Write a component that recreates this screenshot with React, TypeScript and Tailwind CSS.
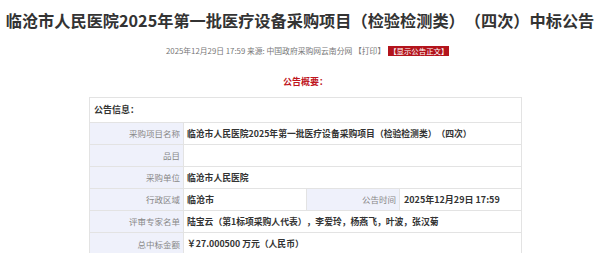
import React from 'react';

interface Row {
  label: string;
  value?: string;
  label2?: string;
  value2?: string;
}

const rows: Row[] = [
  { label: '采购项目名称', value: '临沧市人民医院2025年第一批医疗设备采购项目（检验检测类）（四次）' },
  { label: '品目', value: '' },
  { label: '采购单位', value: '临沧市人民医院' },
  { label: '行政区域', value: '临沧市', label2: '公告时间', value2: '2025年12月29日 17:59' },
  { label: '评审专家名单', value: '陆宝云（第1标项采购人代表），李爱玲，杨燕飞，叶波，张汉菊' },
  { label: '总中标金额', value: '￥27.000500 万元（人民币）' },
];

const font = "font-['Microsoft_YaHei','Noto_Sans_CJK_SC',sans-serif]";

export default function App() {
  return (
    <div className={`w-[600px] h-[253px] overflow-hidden bg-white [text-spacing-trim:space-all] ${font}`}>
      {/* Title */}
      <h1 className="pt-[8px] text-center text-[16.2px] leading-[24px] font-bold text-[#333] whitespace-nowrap">
        临沧市人民医院2025年第一批医疗设备采购项目（检验检测类）（四次）中标公告
      </h1>

      {/* Meta line */}
      <div className="mt-[14px] ml-[166px] flex items-center h-[10px] leading-[10px] text-[#777] whitespace-nowrap">
        <span className="text-[7.8px]">2025年12月29日 17:59 来源: 中国政府采购网云南分网 【打印】</span>
        <span className="ml-[3px] bg-[#b3141c] text-white px-[1px] text-[7.4px] leading-[10px]">【显示公告正文】</span>
      </div>

      {/* Summary heading */}
      <div className="mt-[20px] ml-[283px] text-[9px] leading-[12px] font-bold text-[#c0161e]">公告概要：</div>

      {/* Info table */}
      <div className="mt-[9px] ml-[89px] w-[433px] border border-[#e3e3e3] text-[8.5px]">
        <div className="h-[25px] flex items-center pl-[4px] text-[9px] font-bold text-[#333] border-b border-[#e3e3e3]">
          公告信息：
        </div>
        {rows.map((r) => (
          <div key={r.label} className="h-[22px] flex border-b border-[#e3e3e3] last:border-b-0">
            <div className="w-[94px] shrink-0 flex items-center justify-end pr-[3px] bg-[#eff1fb] text-[#888] border-r border-[#e3e3e3]">
              {r.label}
            </div>
            {r.label2 ? (
              <>
                <div className="w-[123px] flex items-center pl-[3px] text-[9px] font-bold text-[#333] border-r border-[#e3e3e3]">
                  {r.value}
                </div>
                <div className="w-[93px] flex items-center justify-end pr-[3px] bg-[#eff1fb] text-[#888] border-r border-[#e3e3e3]">
                  {r.label2}
                </div>
                <div className="flex-1 flex items-center pl-[4px] text-[9px] font-bold text-[#333]">{r.value2}</div>
              </>
            ) : (
              <div className="flex-1 flex items-center pl-[3px] text-[8.8px] font-bold text-[#333] whitespace-nowrap">{r.value}</div>
            )}
          </div>
        ))}
      </div>
    </div>
  );
}
